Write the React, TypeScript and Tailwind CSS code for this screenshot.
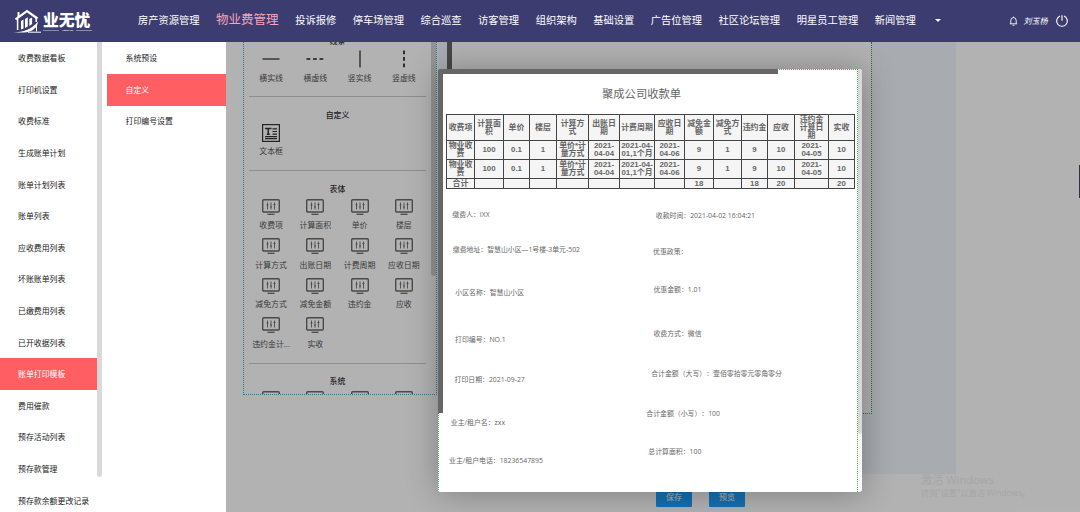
import type { ReactNode } from 'react'
import clsx from 'clsx'

const NAV_ITEMS = [
  '房产资源管理',
  '物业费管理',
  '投诉报修',
  '停车场管理',
  '综合巡查',
  '访客管理',
  '组织架构',
  '基础设置',
  '广告位管理',
  '社区论坛管理',
  '明星员工管理',
  '新闻管理',
]

const SIDE_ITEMS = [
  '收费数据看板',
  '打印机设置',
  '收费标准',
  '生成账单计划',
  '账单计划列表',
  '账单列表',
  '应收费用列表',
  '坏账账单列表',
  '已缴费用列表',
  '已开收据列表',
  '账单打印模板',
  '费用催款',
  '预存活动列表',
  '预存款管理',
  '预存款余额更改记录',
]

const SUB_ITEMS = ['系统预设', '自定义', '打印编号设置']

const TABLE_FIELDS = [
  '收费项', '计算面积', '单价', '楼层',
  '计算方式', '出账日期', '计费周期', '应收日期',
  '减免方式', '减免金额', '违约金', '应收',
  '违约金计...', '实收',
]

const HEAD = [
  '收费项', '计算面积', '单价', '楼层', '计算方式', '出账日期', '计费周期',
  '应收日期', '减免金额', '减免方式', '违约金', '应收', '违约金计算日期', '实收',
]
const ROW = [
  '物业收费', '100', '0.1', '1', '单价*计量方式', '2021-04-04', '2021-04-01,1个月',
  '2021-04-06', '9', '1', '9', '10', '2021-04-05', '10',
]
const TOTAL = ['合计', '', '', '', '', '', '', '', '18', '', '18', '20', '', '20']

// free-placed fields on the receipt, offsets from the receipt's corner
const RECEIPT_FIELDS = [
  { text: '缴费人：IXX', x: 14.3, y: 145.3 },
  { text: '缴费地址：智慧山小区—1号楼-3单元-502', x: 14.8, y: 180.3 },
  { text: '小区名称：智慧山小区', x: 17.3, y: 223.7 },
  { text: '打印编号：NO.1', x: 17, y: 270 },
  { text: '打印日期：2021-09-27', x: 16.5, y: 310 },
  { text: '业主/租户名：zxx', x: 12.8, y: 353.3 },
  { text: '业主/租户电话：18236547895', x: 11, y: 391.5 },
  { text: '收款时间：2021-04-02 16:04:21', x: 217.8, y: 146.3 },
  { text: '优惠政策：', x: 215, y: 182 },
  { text: '优惠金额：1.01', x: 215.4, y: 220.3 },
  { text: '收费方式：微信', x: 215.4, y: 264.5 },
  { text: '合计金额（大写）：壹佰零拾零元零角零分', x: 213.2, y: 304.5 },
  { text: '合计金额（小写）：100', x: 208.3, y: 344 },
  { text: '总计算面积：100', x: 210.3, y: 382.3 },
]

function Logo() {
  return (
    <div className="flex w-[138px] shrink-0 items-center pl-[13px]">
      <svg width="29" height="26" viewBox="0 0 29 26" fill="none" stroke="#fff">
        <path d="M2.500 11.300 14 3l10.500 7.500" strokeWidth="2.200" />
        <path d="M5.500 4v5" strokeWidth="2" />
        <path d="M4.600 11v11M23.200 10v4" strokeWidth="1.500" />
        <path d="M8 13l2.500-1.500v9L8 21.500zM12 11l2.800-1.800V18.500L12 20zM16.300 11l2.800-1.500v6.500l-2.800 2z" fill="#fff" stroke="none" />
        <path d="M0 24.500c9-.3 18-2.500 25-11C24.500 20 19 24.300 11 24.500z" fill="#fff" stroke="none" />
        <path d="M5 23.200c7-.6 13-3.500 17-7.500" stroke="#3d3c70" strokeWidth=".7" />
        <path d="M15 24.200h13M23.500 16v7.500" strokeWidth="1" />
      </svg>
      <div className="ml-[1px] flex flex-col pt-[2px]">
        <span className="text-[15.800px] leading-[16px] font-black text-white">业无忧</span>
        <div className="mt-[1px] flex h-[3px] items-center gap-[1px]">
          <span className="h-px w-4 bg-white/40" />
          <span className="w-[15px] text-center font-['Liberation_Sans'] text-[2.500px] leading-[3px] font-bold text-white">YWUYOU</span>
          <span className="h-px w-4 bg-white/40" />
        </div>
      </div>
    </div>
  )
}

function Header() {
  return (
    <header className="flex h-[42px] shrink-0 items-center bg-[#3d3c70] text-white">
      <Logo />
      <nav className="flex items-center gap-[16.550px] pb-[2px]">
        {NAV_ITEMS.map((item) => (
          <span
            key={item}
            className={clsx(
              'leading-4 whitespace-nowrap',
              item === '物业费管理' ? 'text-[12.500px] text-[#f5a6b8]' : 'text-[10.250px]',
            )}
          >
            {item}
          </span>
        ))}
        <span className="ml-[3px] border-x-[3.500px] border-t-[3.500px] border-x-transparent border-t-white" />
      </nav>
      <div className="ml-auto flex items-center pr-[12.500px]">
        <svg width="9" height="10" viewBox="0 0 9 10" fill="none" stroke="#fff" strokeWidth=".9">
          <path d="M.8 7.800h7.400M1.800 7.600V4.500a2.700 2.900 0 0 1 5.400 0v3.100M4.500 1.600V.6M3.500 9.200h2" />
        </svg>
        <span className="ml-[6px] text-[8px] leading-3 italic">刘玉杨</span>
        <svg className="ml-[8px]" width="12" height="12" viewBox="0 0 12 12" fill="none" stroke="#fff" strokeWidth="1.100">
          <path d="M4 1.100a5.300 5.300 0 1 0 4 0M6 .3v5.400" />
        </svg>
      </div>
    </header>
  )
}

function SideMenu() {
  return (
    <aside className="flex w-[107px] shrink-0 bg-white">
      <ul className="w-[97px] shrink-0 pt-[0.400px]">
        {SIDE_ITEMS.map((item) => (
          <li
            key={item}
            className={clsx(
              'flex h-[31.600px] items-center pt-[2px] pl-[18px] text-[7.920px] whitespace-nowrap',
              item === '账单打印模板' ? 'bg-[#ff5e63] text-white' : 'text-[#222]',
            )}
          >
            {item}
          </li>
        ))}
      </ul>
      <div className="h-[435px] w-[4.500px] rounded-b-full bg-[#d9d9d9]" />
    </aside>
  )
}

function SubMenu() {
  return (
    <ul className="w-[119px] shrink-0 bg-white pt-[0.400px]">
      {SUB_ITEMS.map((item) => (
        <li
          key={item}
          className={clsx(
            'flex h-[31.600px] items-center pt-[2px] pl-[18.500px] text-[7.920px]',
            item === '自定义' ? 'bg-[#ff5e63] text-white' : 'text-[#222]',
          )}
        >
          {item}
        </li>
      ))}
    </ul>
  )
}

function FieldIcon() {
  return (
    <svg width="18" height="16" viewBox="0 0 18 16" fill="none" stroke="#6a6a6a" strokeWidth="1.400">
      <rect x=".7" y=".7" width="16.600" height="12.300" rx="1" />
      <path d="M5.500 15.300h7" strokeWidth="1.300" />
      <path d="M5.500 3.500v7M9 3.500v7M12.500 3.500v7" strokeWidth=".9" />
      <path d="M4.500 6h2M8 8h2M11.500 5.500h2" strokeWidth=".9" />
    </svg>
  )
}

function TextIcon() {
  return (
    <svg width="18" height="18" viewBox="0 0 18 18" fill="none" stroke="#333" strokeWidth="1.200">
      <rect x=".6" y=".6" width="16.800" height="16.800" />
      <path d="M3 4.500h6.500M6.200 4.500v6M4.800 10.300h3" strokeWidth="1.500" />
      <path d="M10.500 4.800H15M10.500 7.500H15M10.500 10.200H15M3 12.600h12M3 14.600h12" />
    </svg>
  )
}

function LineIcon({ vertical, dashed }: { vertical?: boolean; dashed?: boolean }) {
  return (
    <svg width="18" height="18" viewBox="0 0 18 18" stroke={dashed ? '#222' : '#333'}>
      <path
        d={vertical ? 'M9 .5v17' : 'M.5 9h17'}
        strokeWidth={dashed ? 1.7 : 1.3}
        strokeDasharray={dashed ? '3.800 2.700' : undefined}
      />
    </svg>
  )
}

function Section({ title, children }: { title: string; children?: ReactNode }) {
  return (
    <section className="border-b border-[#ccc] pt-[11.400px] pb-[7.600px]">
      <h3 className="mb-[2.300px] h-3 text-center text-[7.900px] leading-3 font-medium text-[#333]">{title}</h3>
      <div className="grid grid-cols-4">{children}</div>
    </section>
  )
}

function Widget({ icon, label }: { icon: ReactNode; label: string }) {
  return (
    <div className="flex h-[39.500px] flex-col items-center">
      <div className="flex h-5 items-center">{icon}</div>
      <span className="mt-[2.200px] text-center text-[7.900px] leading-3 whitespace-nowrap text-[#555]">{label}</span>
    </div>
  )
}

function WidgetPanel() {
  return (
    <div className="ml-[17px] flex h-[353px] w-[193.500px] shrink-0 overflow-hidden border border-t-0 border-dotted border-[#3fa6d6]">
      <div className="mt-[-18.300px] ml-[5px] w-[177px]">
        <Section title="线条">
          <Widget icon={<LineIcon />} label="横实线" />
          <Widget icon={<LineIcon dashed />} label="横虚线" />
          <Widget icon={<LineIcon vertical />} label="竖实线" />
          <Widget icon={<LineIcon vertical dashed />} label="竖虚线" />
        </Section>
        <Section title="自定义">
          <Widget icon={<TextIcon />} label="文本框" />
        </Section>
        <Section title="表体">
          {TABLE_FIELDS.map((label) => (
            <Widget key={label} icon={<FieldIcon />} label={label} />
          ))}
        </Section>
        <Section title="系统">
          <Widget icon={<FieldIcon />} label="" />
          <Widget icon={<FieldIcon />} label="" />
          <Widget icon={<FieldIcon />} label="" />
          <Widget icon={<FieldIcon />} label="" />
        </Section>
      </div>
      <div className="ml-auto h-[234px] w-[5px] rounded-b-full bg-[#d5d5d5]" />
    </div>
  )
}

function TableRow({ cells, height }: { cells: string[]; height: string }) {
  return (
    <>
      {cells.map((cell, i) => (
        <div
          key={i}
          className={clsx(
            'flex items-center justify-center border-r border-b border-[#444] text-center break-words',
            height,
            i === 12 && 'px-[4px]',
          )}
        >
          <span className="w-full">{cell}</span>
        </div>
      ))}
    </>
  )
}

function ReceiptDialog() {
  return (
    <div className="absolute top-[69px] left-[438px] flex h-[423px] w-[424px] overflow-hidden rounded-[3px] bg-white">
      <div className="relative w-[420px] border border-b-0 border-dotted border-[#4cae4c]">
        {/* rulers */}
        <div className="absolute -top-px -left-px h-[4.500px] w-[340px] bg-[#666]" />
        <div className="absolute -top-px -left-px h-[343.500px] w-[5px] bg-[#666]" />

        <h2 className="pt-[16px] pl-[163px] text-[11.300px] leading-4 text-[#666]">聚成公司收款单</h2>
        <div className="mt-[12px] ml-[7px] grid w-[409px] grid-cols-[28px_29px_26px_27px_32px_31px_35px_30px_29px_28px_26px_27px_34px_26px] border-t border-l border-[#444] bg-[#f5f5f5] font-['Liberation_Sans','Noto_Sans_CJK_SC',sans-serif] text-[7.900px] leading-[8px] font-bold text-[#666]">
          <TableRow cells={HEAD} height="h-[26px]" />
          <TableRow cells={ROW} height="h-[19px]" />
          <TableRow cells={ROW} height="h-[19px]" />
          <TableRow cells={TOTAL} height="h-[10px]" />
        </div>

        {RECEIPT_FIELDS.map((field) => (
          <span
            key={field.text}
            className="absolute -mt-[5.500px] text-[6.880px] leading-[10px] whitespace-nowrap text-[#666] [text-spacing-trim:space-all]"
            style={{ left: field.x - 1, top: field.y }}
          >
            {field.text}
          </span>
        ))}
      </div>
      <div className="h-[365px] w-1 rounded-b-full bg-[#d9d9d9]" />
    </div>
  )
}

export default function App() {
  return (
    <div className="relative flex h-[512px] w-[1080px] flex-col overflow-hidden bg-white font-['Open_Sans','Noto_Sans_CJK_SC',sans-serif]">
      <Header />
      <div className="flex min-h-0 flex-1">
        <SideMenu />
        <SubMenu />
        <main className="relative min-w-0 flex-1 overflow-hidden bg-white">
          <div className="flex h-[432px]">
            <WidgetPanel />
            <div className="ml-[1.500px] w-[518px] bg-[#f1f6fc]">
              <div className="ml-[9px] h-[372px] w-[425px] border border-t-0 border-dotted border-[#3c9a3c] bg-white">
                <div className="-ml-px h-full w-[4.500px] bg-[#666]" />
              </div>
            </div>
          </div>
          <div className="flex gap-[17px] pl-[430px] text-[7.900px] text-white">
            <button className="h-[33px] w-9 rounded-[1px] bg-[#1e9fff] pt-[12px] leading-3">保存</button>
            <button className="h-[33px] w-9 rounded-[1px] bg-[#1e9fff] pt-[12px] leading-3">预览</button>
          </div>
          {/* dialog mask and shadow, kept clear of the menus */}
          <div className="absolute inset-0 bg-black/30" />
          <div className="absolute top-[27px] left-[212px] h-[423px] w-[424px] rounded-[3px] shadow-[1px_1px_33px_rgba(0,0,0,0.3)]" />
          <div className="absolute top-[123px] right-0 h-[33px] w-px bg-[#333340]" />
          <div className="absolute top-[431px] left-[695px] text-[#a6a6a6]">
            <p className="text-[11.200px] leading-[14px]">激活 Windows</p>
            <p className="text-[8.200px] leading-3">转到"设置"以激活 Windows。</p>
          </div>
        </main>
      </div>
      <ReceiptDialog />
    </div>
  )
}
